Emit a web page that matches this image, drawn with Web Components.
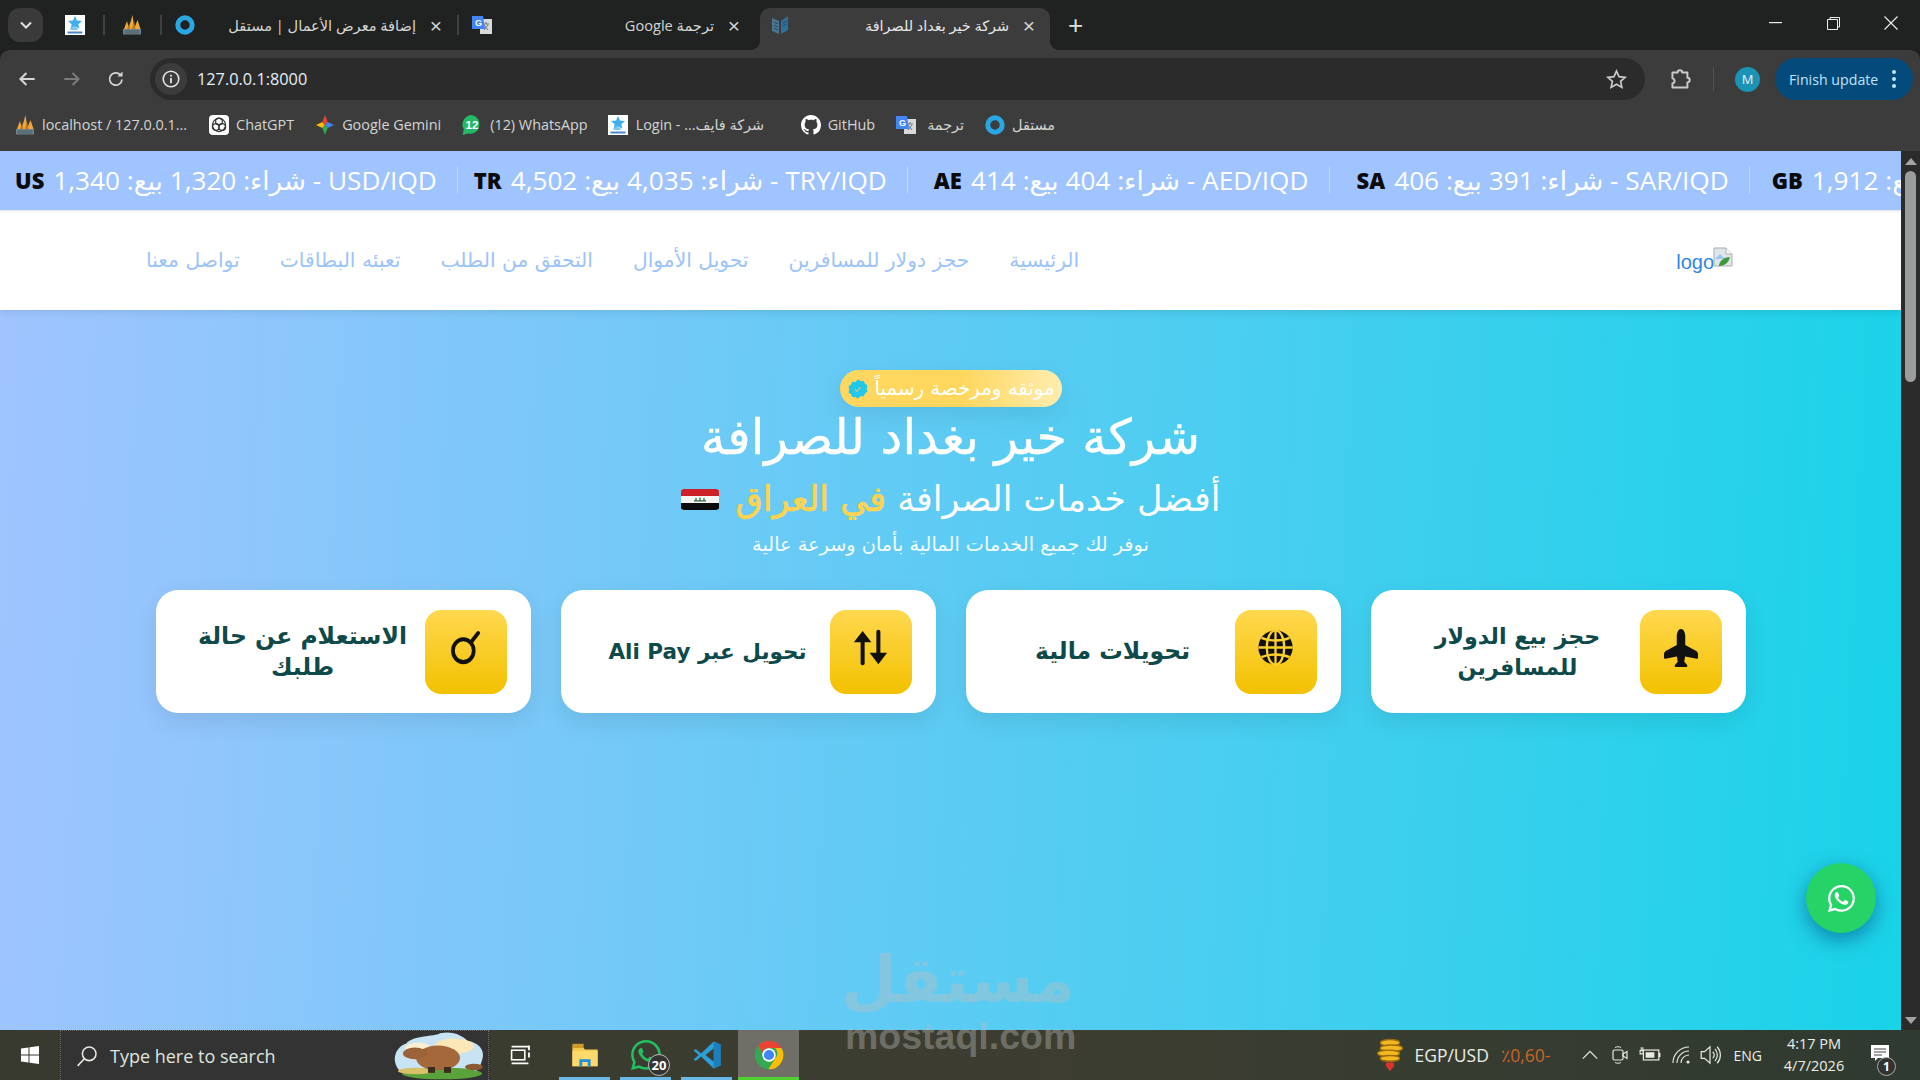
<!DOCTYPE html>
<html lang="ar">
<head>
<meta charset="utf-8">
<title>شركة خير بغداد للصرافة</title>
<style>
  html, body { margin: 0; height: 100%; overflow: hidden; background: #202221; }
  body { display: flex; flex-direction: column; height: 1080px; font-family: "DejaVu Sans", sans-serif; position: relative; }
</style>
</head>
<body>
<browser-chrome></browser-chrome>
<page-view>
  <rate-ticker></rate-ticker>
  <site-nav></site-nav>
  <hero-section></hero-section>
</page-view>
<win-taskbar></win-taskbar>
<mostaql-mark></mostaql-mark>

<script>
const WA_PATH = 'M13.601 2.326A7.85 7.85 0 0 0 7.994 0C3.627 0 .068 3.558.064 7.926c0 1.399.366 2.76 1.057 3.965L0 16l4.204-1.102a7.9 7.9 0 0 0 3.79.965h.004c4.368 0 7.926-3.558 7.93-7.93A7.9 7.9 0 0 0 13.6 2.326zM7.994 14.521a6.6 6.6 0 0 1-3.356-.92l-.24-.144-2.494.654.666-2.433-.156-.251a6.56 6.56 0 0 1-1.007-3.505c0-3.626 2.957-6.584 6.591-6.584a6.56 6.56 0 0 1 4.66 1.931 6.56 6.56 0 0 1 1.928 4.66c-.004 3.639-2.961 6.592-6.592 6.592m3.615-4.934c-.197-.099-1.17-.578-1.353-.646-.182-.065-.315-.099-.445.099-.133.197-.513.646-.627.775-.114.133-.232.148-.43.05-.197-.1-.836-.308-1.592-.985-.59-.525-.985-1.175-1.103-1.372-.114-.198-.011-.304.088-.403.087-.088.197-.232.296-.346.1-.114.133-.198.198-.33.065-.134.034-.248-.015-.347-.05-.099-.445-1.076-.612-1.47-.16-.389-.323-.335-.445-.34-.114-.007-.247-.007-.38-.007a.73.73 0 0 0-.529.247c-.182.198-.691.677-.691 1.654s.71 1.916.81 2.049c.098.133 1.394 2.132 3.383 2.992.47.205.84.326 1.129.418.475.152.904.129 1.246.08.38-.058 1.171-.48 1.338-.943.164-.464.164-.86.114-.943-.049-.084-.182-.133-.38-.232';

// all the little pictures live here, viewBox is always 0 0 20 20 unless the value says otherwise
const ICONS = {
  star: `<rect width="20" height="20" fill="#fff"/><path d="M10 1l2 4.600 5 .4-3.700 3.200 1.100 4.600L10 11.400l-4.400 2.400 1.100-4.600L3 6l5-.4z" fill="#3fb0ee"/><path d="M6 13l3-2 3 2 1 2H5z" fill="#7cc8f2"/><rect x="2.500" y="16.500" width="15" height="2" fill="#4a86c8"/>`,
  pma: `<path d="M2 14L5 6l2 8zM6.500 14L10.500 0l2 14zM12 14l3.500-9 3 9z" fill="#efa93a"/><path d="M5 14l2.500-6 .5 6zM10 14l2-8 1.500 8z" fill="#b9781f"/><rect x="1" y="14" width="18" height="5.500" fill="#70828a"/><path d="M2.500 16h15M2.500 18h15" stroke="#40505a" stroke-width=".8"/>`,
  ring: `<circle cx="10" cy="10" r="7.200" fill="none" stroke="#2aa7e2" stroke-width="5"/>`,
  translate: `<rect x="8" y="4" width="12" height="15" fill="#d7dad9"/><path d="M11 9h6M14 7v2M12 15l4-5M12 10l4 5" stroke="#777" stroke-width="1"/><path d="M0 1h11l2 13H0z" fill="#4285f4"/><text x="3" y="11" font-family="Liberation Sans" font-size="9" font-weight="700" fill="#fff">G</text>`,
  book: `<path d="M2 3l7 3v13l-7-3z" fill="#4d7488"/><path d="M18 1l-7 5v13l7-4z" fill="#2e6f9c"/><path d="M4 7l4 2M4 10l4 2M4 13l4 2M13 8l4-2M13 11l4-2" stroke="#16507c" stroke-width="1"/>`,
  chatgpt: `<rect width="20" height="20" rx="4" fill="#fff"/><g fill="none" stroke="#333" stroke-width="1.200"><circle cx="10" cy="6.500" r="3.400"/><circle cx="6.800" cy="12" r="3.400"/><circle cx="13.200" cy="12" r="3.400"/><circle cx="10" cy="10" r="6.600"/></g>`,
  gemini: `<path d="M10 0l3 7-3 3z" fill="#ea4335"/><path d="M20 10l-7-3-3 3z" fill="#4285f4"/><path d="M10 20l3-7-3-3z" fill="#34a853"/><path d="M0 10l7-3 3 3z" fill="#fbbc04"/><path d="M0 10l7 3 3-3z" fill="#fbbc04"/><path d="M20 10l-7 3-3-3z" fill="#4285f4"/><path d="M10 20l-3-7 3-3z" fill="#34a853"/><path d="M10 0L7 7l3 3z" fill="#ea4335"/>`,
  wabadge: `<path d="M10 0a9.500 9.500 0 0 0-8.200 14.300L.5 20l5.600-1.400A9.500 9.500 0 1 0 10 0z" fill="#25b866"/><text x="10" y="14" text-anchor="middle" font-family="Liberation Sans" font-size="11.500" font-weight="700" fill="#fff">12</text>`,
  github: `<svg viewBox="0 0 16 16" x="0" y="0" width="20" height="20"><path fill="#fff" d="M8 0C3.58 0 0 3.58 0 8c0 3.54 2.29 6.53 5.47 7.59.4.07.55-.17.55-.38 0-.19-.01-.82-.01-1.49-2.01.37-2.53-.49-2.69-.94-.09-.23-.48-.94-.82-1.13-.28-.15-.68-.52-.01-.53.63-.01 1.08.58 1.23.82.72 1.21 1.87.87 2.33.66.07-.52.28-.87.51-1.07-1.78-.2-3.64-.89-3.64-3.95 0-.87.31-1.59.82-2.15-.08-.2-.36-1.02.08-2.12 0 0 .67-.21 2.2.82.64-.18 1.32-.27 2-.27s1.36.09 2 .27c1.53-1.04 2.2-.82 2.2-.82.44 1.1.16 1.92.08 2.12.51.56.82 1.27.82 2.15 0 3.07-1.87 3.75-3.65 3.95.29.25.54.73.54 1.48 0 1.07-.01 1.93-.01 2.2 0 .21.15.46.55.38A8.01 8.01 0 0 0 16 8c0-4.42-3.58-8-8-8"/></svg>`,
  back: `<path d="M17 10H4M9.500 4.500L4 10l5.500 5.500" fill="none" stroke="#d5d7d6" stroke-width="1.800"/>`,
  forward: `<path d="M3 10h13M10.500 4.500L16 10l-5.500 5.500" fill="none" stroke="#7b7d7c" stroke-width="1.800"/>`,
  reload: `<path d="M16 10.500A6.200 6.200 0 1 1 14.200 5.600" fill="none" stroke="#d5d7d6" stroke-width="1.700"/><path d="M16.500 2.500v5h-5z" fill="#d5d7d6"/>`,
  info: `<circle cx="10" cy="10" r="7.800" fill="none" stroke="#e3e5e4" stroke-width="1.600"/><rect x="9.100" y="9" width="1.800" height="5.200" fill="#e3e5e4"/><rect x="9.100" y="5.800" width="1.800" height="1.800" fill="#e3e5e4"/>`,
  bookmark: `<path d="M10 2l2.400 5.300 5.800.6-4.300 3.900 1.200 5.700L10 14.600l-5.100 2.900 1.200-5.700L1.800 7.900l5.800-.6z" fill="none" stroke="#c9cbca" stroke-width="1.600"/>`,
  puzzle: `<path d="M3 4h4.500a2 2 0 0 1 4 0H16v4.500a2 2 0 0 1 0 4V17H3v-3.500a2.300 2.300 0 0 0 0-4.500z" fill="none" stroke="#c9cbca" stroke-width="1.700" stroke-linejoin="round"/>`,
  plane: `<svg viewBox="0 0 16 16" width="20" height="20"><path fill="#111" d="M6.428 1.151C6.708.591 7.213 0 8 0s1.292.592 1.572 1.151C9.861 1.73 10 2.431 10 3v3.691l5.17 2.585a1.5 1.5 0 0 1 .83 1.342V12a.5.5 0 0 1-.582.493l-5.507-.918-.375 2.253 1.318 1.318A.5.5 0 0 1 10.5 16h-5a.5.5 0 0 1-.354-.854l1.319-1.318-.376-2.253-5.507.918A.5.5 0 0 1 0 12v-1.382a1.5 1.5 0 0 1 .83-1.342L6 6.691V3c0-.568.14-1.271.428-1.849"/></svg>`,
  globe: `<circle cx="10" cy="10" r="9.800" fill="#111"/><g fill="none" stroke="#fad02f" stroke-width="1.300"><path d="M10 .2v19.600M.2 10h19.600"/><ellipse cx="10" cy="10" rx="5" ry="9.800"/><path d="M2 4.500c4.500 2 11.500 2 16 0M2 15.500c4.500-2 11.500-2 16 0"/></g>`,
  updown: `<path d="M5.500 19V4" stroke="#111" stroke-width="2.300" stroke-linecap="round"/><path d="M5.500.5l5 6.500H.5z" fill="#111"/><path d="M14.500 1v15" stroke="#111" stroke-width="2.300" stroke-linecap="round"/><path d="M14.500 19.500l-5-6.500h10z" fill="#111"/>`,
  search: `<circle cx="8.600" cy="11.600" r="6.700" fill="none" stroke="#111" stroke-width="2.400"/><path d="M13.500 6.700L18.200 1.200" stroke="#111" stroke-width="2.400" stroke-linecap="round"/>`,
  brokenimg: `<path d="M1 1h12l6 6v12H1z" fill="#dfe6ea" stroke="#a9aeb2"/><path d="M13 1v6h6" fill="#fff" stroke="#a9aeb2"/><path d="M2 12l5-5 5 5z" fill="#9cc8ef"/><path d="M6 19c0-5 5-9 11-9-1 5-5 9-11 9z" fill="#3f9a3a"/>`,
  seal: `<path d="M10 .5l2.700 1.600 3.100-.2 1.200 2.900 2.500 1.800-.8 3 .8 3-2.500 1.800-1.200 2.900-3.100-.2L10 19.500l-2.700-1.600-3.100.2L3 15.200.5 13.400l.8-3-.8-3L3 5.600l1.200-2.900 3.100.2z" fill="#1fc8ec"/><path d="M7 10.300l2 2 3.800-4.200" fill="none" stroke="#d8c46a" stroke-width="1.200"/>`,
  flag: `<svg viewBox="0 0 38 22" width="20" height="20" preserveAspectRatio="none"><rect width="38" height="22" rx="3" fill="#f4f4f2"/><path d="M0 7.300V3a3 3 0 0 1 3-3h32a3 3 0 0 1 3 3v4.300z" fill="#ce2028"/><path d="M0 14.700h38V19a3 3 0 0 1-3 3H3a3 3 0 0 1-3-3z" fill="#0c0c0c"/><path d="M13 12.500h12M15 9.500v3M19 9v3.500M23 9.500v3" stroke="#3a6b4a" stroke-width="1.300"/></svg>`,
  windows: `<path d="M1 3.400l7.500-1v7H1zM9.500 2.200L19 1v8.400H9.500zM1 10.500h7.500v7.100l-7.500-1zM9.500 10.500H19V19l-9.500-1.300z" fill="#fff"/>`,
  magnifier: `<circle cx="12" cy="8" r="6.200" fill="none" stroke="#e8e8e4" stroke-width="1.400"/><path d="M7.600 12.500L1.500 19" stroke="#e8e8e4" stroke-width="1.400"/>`,
  taskview: `<path d="M3 3h14M3 17h14" stroke="#fff" stroke-width="1.300"/><rect x="3" y="6" width="11" height="8" fill="none" stroke="#fff" stroke-width="1.300"/><path d="M17.500 2v4M17.500 8v4" stroke="#fff" stroke-width="1.500"/>`,
  folder: `<path d="M1 4h7l2 2h9v12H1z" fill="#f4c84e"/><rect x="1" y="2" width="8" height="3" fill="#cf9a2a"/><path d="M1 7h18v11H1z" fill="#ffd96b"/><path d="M6 13h8v5h-2v-3H8v3H6z" fill="#1f8ee0"/>`,
  waline: `<svg viewBox="0 0 16 16" width="20" height="20"><path fill="#21c063" d="${WA_PATH}"/></svg>`,
  vscode: `<path d="M14.500 1L19 3v14l-4.500 2L6 11l-3.500 3L1 13l3.500-3L1 7l1.500-1L6 9z" fill="#2a9fd8"/><path d="M14.500 5.500L9 10l5.500 4.500z" fill="#3b3c30"/><path d="M14.500 1L19 3v14l-4.500 2z" fill="#1b7ebd"/>`,
  chrome: `<circle cx="10" cy="10" r="9.500" fill="#34a853"/><path d="M10 .5a9.500 9.500 0 0 1 8.300 4.800H10a4.700 4.700 0 0 0-4.400 3L2.700 3.900A9.500 9.500 0 0 1 10 .5z" fill="#ea4335"/><path d="M18.300 5.300A9.500 9.500 0 0 1 9.600 19.500l4.400-7A4.700 4.700 0 0 0 14 5.300z" fill="#fbbc04"/><circle cx="10" cy="10" r="4.500" fill="#fff"/><circle cx="10" cy="10" r="3.400" fill="#4285f4"/>`,
  coins: `<g fill="#f2b81e" stroke="#9a6a12" stroke-width=".8"><ellipse cx="10" cy="2.800" rx="7" ry="1.900"/><ellipse cx="11" cy="6" rx="8" ry="1.900"/><ellipse cx="9" cy="9" rx="8" ry="1.900"/><ellipse cx="10" cy="12" rx="7" ry="1.700"/></g><path d="M10 19.500l-3-3a1.800 1.800 0 0 1 3-1.800 1.800 1.800 0 0 1 3 1.800z" fill="#d8342c"/>`,
  chevup: `<path d="M2 14l8-8 8 8" fill="none" stroke="#e8e8e4" stroke-width="1.400"/>`,
  meet: `<rect x="3" y="5" width="10" height="10" rx="1.500" fill="none" stroke="#e8e8e4" stroke-width="1.200"/><path d="M13 9l4-2.500v7L13 11z" fill="none" stroke="#e8e8e4" stroke-width="1.200"/><path d="M5 2.500c2-1 4-1 6 0M5 17.500c2 1 4 1 6 0" fill="none" stroke="#e8e8e4"/>`,
  battery: `<rect x="4" y="5.500" width="14" height="9" fill="none" stroke="#e8e8e4" stroke-width="1.100"/><rect x="6" y="7.500" width="8" height="5" fill="#e8e8e4"/><rect x="18" y="8" width="1.500" height="4" fill="#e8e8e4"/><path d="M1 6h3v3H1zM2 3v3M3.500 3v3" stroke="#e8e8e4" fill="none"/>`,
  wifi: `<g fill="none" stroke="#e8e8e4" stroke-width="1.100"><path d="M1 18A16 16 0 0 1 17 2"/><path d="M5 18A12 12 0 0 1 17 6"/><path d="M9 18a8 8 0 0 1 8-8"/></g><circle cx="16" cy="17" r="1.600" fill="#e8e8e4"/>`,
  volume: `<path d="M2 7h3l5-4.500v15L5 13H2z" fill="none" stroke="#e8e8e4" stroke-width="1.100"/><path d="M12.500 7a4 4 0 0 1 0 6M14.500 4.500a8 8 0 0 1 0 11M16.500 2.500a11 11 0 0 1 0 15" fill="none" stroke="#e8e8e4" stroke-width="1.100"/>`,
  note: `<path d="M1 2h18v13H8l-3 3v-3H1z" fill="#fff"/><path d="M4 6h12M4 9h12M4 12h8" stroke="#444" stroke-width="1.100"/>`,
  beaver: `<svg viewBox="0 0 94 74" width="20" height="20" preserveAspectRatio="none"><path d="M8 60C-2 44 4 22 14 18 22 4 42 8 48 2c14-4 22 4 28 12 10 2 18 14 14 30-2 10-4 16-8 18z" fill="#c8e3f3"/><ellipse cx="62" cy="22" rx="20" ry="12" fill="#fbe7b8"/><ellipse cx="26" cy="26" rx="13" ry="10" fill="#fbf1d2"/><ellipse cx="50" cy="64" rx="40" ry="9" fill="#5aa23b"/><ellipse cx="24" cy="60" rx="18" ry="5" fill="#d9c169"/><ellipse cx="46" cy="40" rx="22" ry="19" fill="#a5683a"/><ellipse cx="23" cy="33" rx="12" ry="9" fill="#9c6238"/><ellipse cx="82" cy="54" rx="9" ry="5" fill="#8a5a32"/><rect x="36" y="54" width="7" height="9" fill="#3c2a1c"/><rect x="52" y="54" width="7" height="9" fill="#3c2a1c"/></svg>`
};

class UiIcon extends HTMLElement {
  connectedCallback() {
    const w = this.getAttribute('w') || 20;
    const h = this.getAttribute('h') || w;
    const name = this.getAttribute('name');
    this.attachShadow({ mode: 'open' }).innerHTML = `
      <style>:host { display: inline-flex; flex: none; width: ${w}px; height: ${h}px; } svg { display: block; width: 100%; height: 100%; overflow: visible; }</style>
      <svg viewBox="0 0 20 20" preserveAspectRatio="none">${ICONS[name]}</svg>`;
    const inner = this.shadowRoot.querySelector('svg svg');
    if (inner) { inner.setAttribute('width', '20'); inner.setAttribute('height', '20'); }
  }
}
customElements.define('ui-icon', UiIcon);

class TabItem extends HTMLElement {
  connectedCallback() {
    this.attachShadow({ mode: 'open' }).innerHTML = `
      <style>
        :host { display: flex; align-items: center; height: 42px; box-sizing: border-box; color: #d4d6d5; font-size: 14.6px; position: relative; flex: none; padding: 0 0 8px ${this.getAttribute('pad') || 0}px; }
        :host([active]) { background: #3c3c3c; border-radius: 10px 10px 0 0; color: #e6e8e7; font-size: 14.4px; }
        :host([active])::before, :host([active])::after { content: ""; position: absolute; bottom: 0; width: 10px; height: 10px; }
        :host([active])::before { left: -10px; background: radial-gradient(circle at 0 0, transparent 10px, #3c3c3c 10.500px); }
        :host([active])::after { right: -10px; background: radial-gradient(circle at 100% 0, transparent 10px, #3c3c3c 10.500px); }
        .label { flex: 1; direction: rtl; text-align: right; white-space: nowrap; font-family: "Open Sans", "DejaVu Sans", sans-serif; padding-right: 5px; }
        .close { width: 30px; text-align: center; color: #d4d6d5; font: 21px/1 "Liberation Sans", sans-serif; margin-right: 6px; }
      </style>
      <slot name="icon"></slot>
      <div class="label"><slot></slot></div>
      <div class="close">×</div>`;
  }
}
customElements.define('tab-item', TabItem);

class BookmarkItem extends HTMLElement {
  connectedCallback() {
    this.attachShadow({ mode: 'open' }).innerHTML = `
      <style>
        :host { display: flex; align-items: center; gap: 7px; flex: none; color: #d3d5d4; font: 14.4px "Open Sans", "DejaVu Sans", sans-serif; white-space: nowrap; }
      </style>
      <slot name="icon"></slot><span><slot></slot></span>`;
  }
}
customElements.define('bookmark-item', BookmarkItem);

class BrowserChrome extends HTMLElement {
  constructor() {
    super();
    this.attachShadow({ mode: 'open' });
  }

  connectedCallback() {
    this.render();
  }

  render() {
    this.shadowRoot.innerHTML = `
      <style>
        :host { display: block; flex: none; height: 151px; background: #202221; font-family: "Open Sans", "DejaVu Sans", sans-serif; }
        .strip { display: flex; align-items: flex-end; height: 50px; position: relative; }
        .chev { width: 35px; height: 34px; border-radius: 12px; background: #3a3a3a; margin: 0 0 8px 8px; display: flex; align-items: center; justify-content: center; flex: none; }
        .fav { display: flex; align-items: center; height: 34px; margin-bottom: 8px; flex: none; }
        .sep { width: 2px; height: 20px; background: #3f4140; margin-bottom: 15px; flex: none; }
        .plus { margin-left: 18px; margin-bottom: 15px; color: #dfe1e0; font: 26px/20px "Liberation Sans", sans-serif; }
        .winbtns { margin-left: auto; display: flex; height: 50px; align-items: center; padding-bottom: 4px; box-sizing: border-box; }
        .winbtns div { width: 58px; display: flex; justify-content: center; }
        .tools { height: 50px; background: #3c3c3c; border-radius: 10px 10px 0 0; display: flex; align-items: flex-start; box-sizing: border-box; padding: 8px 8px 0 0; }
        .nav { display: flex; align-items: center; width: 150px; height: 42px; padding-left: 16px; box-sizing: border-box; gap: 23px; flex: none; }
        .omni { flex: none; width: 1495px; height: 42px; border-radius: 21px; background: #2b2b2b; display: flex; align-items: center; padding-left: 5px; padding-right: 18px; box-sizing: border-box; }
        .info { width: 32px; height: 32px; border-radius: 50%; background: #3c3c3c; display: flex; align-items: center; justify-content: center; }
        .url { margin-left: 10px; color: #e4f0f5; font-size: 16.3px; flex: 1; }
        .right { display: flex; align-items: center; height: 42px; flex: 1; }
        .divider { width: 1px; height: 24px; background: #5a5048; margin: 0 21px 0 21px; }
        .avatar { width: 25px; height: 25px; border-radius: 50%; background: #1a93b4; color: #eef; font: 13px/25px "Open Sans", sans-serif; text-align: center; }
        .update { width: 138px; height: 42px; margin-left: 15px; border-radius: 21px; background: #044a7a; color: #bfe3ff; font-size: 14.2px; display: flex; align-items: center; justify-content: space-between; padding: 0 17px 0 14px; box-sizing: border-box; white-space: nowrap; }
        .dots { display: flex; flex-direction: column; gap: 3px; }
        .dots i { width: 4px; height: 4px; border-radius: 50%; background: #bfe3ff; display: block; }
        .bookmarks { height: 51px; background: #3c3c3c; display: flex; align-items: center; padding-left: 15px; padding-bottom: 2px; box-sizing: border-box; }
      </style>
      <div class="strip">
        <div class="chev"><svg width="12" height="8" viewBox="0 0 12 8"><path d="M1 1.500l5 5 5-5" fill="none" stroke="#e0e2e1" stroke-width="2"/></svg></div>
        <div class="fav" style="margin-left:22px"><ui-icon name="star"></ui-icon></div>
        <div class="sep" style="margin-left:18px"></div>
        <div class="fav" style="margin-left:17px"><ui-icon name="pma"></ui-icon></div>
        <div class="sep" style="margin-left:18px"></div>
        <div class="fav" style="margin-left:13px"><ui-icon name="ring"></ui-icon></div>
        <tab-item style="width:262px"><span>إضافة معرض الأعمال | مستقل</span></tab-item>
        <div class="sep"></div>
        <div class="fav" style="margin-left:13px"><ui-icon name="translate"></ui-icon></div>
        <tab-item style="width:263px"><span>ترجمة Google</span></tab-item>
        <tab-item active style="width:290px;margin-left:5px" pad="10"><ui-icon slot="icon" name="book"></ui-icon><span>شركة خير بغداد للصرافة</span></tab-item>
        <div class="plus">+</div>
        <div class="winbtns">
          <div><svg width="13" height="2"><rect width="13" height="1.200" fill="#eee"/></svg></div>
          <div><svg width="13" height="13" viewBox="0 0 13 13"><path d="M3 2.500V.5h9.500V10H10.500M.5 2.500h10v10H.5z" fill="none" stroke="#eee"/></svg></div>
          <div><svg width="14" height="14" viewBox="0 0 14 14"><path d="M.5.5l13 13M13.500.5l-13 13" stroke="#eee" stroke-width="1.100"/></svg></div>
        </div>
      </div>
      <div class="tools">
        <div class="nav"><ui-icon name="back" w="22"></ui-icon><ui-icon name="forward" w="22"></ui-icon><ui-icon name="reload" w="20"></ui-icon></div>
        <div class="omni">
          <div class="info"><ui-icon name="info"></ui-icon></div>
          <div class="url">127.0.0.1:8000</div>
          <ui-icon name="bookmark" w="21"></ui-icon>
        </div>
        <div class="right">
          <ui-icon name="puzzle" w="23" style="margin-left:24px"></ui-icon>
          <div class="divider"></div>
          <div class="avatar">M</div>
          <div class="update">Finish update<div class="dots"><i></i><i></i><i></i></div></div>
        </div>
      </div>
      <div class="bookmarks">
        <bookmark-item><ui-icon slot="icon" name="pma"></ui-icon>localhost / 127.0.0.1...</bookmark-item>
        <bookmark-item style="margin-left:22px"><ui-icon slot="icon" name="chatgpt"></ui-icon>ChatGPT</bookmark-item>
        <bookmark-item style="margin-left:22px;gap:8px"><ui-icon slot="icon" name="gemini" w="18" h="20"></ui-icon>Google Gemini</bookmark-item>
        <bookmark-item style="margin-left:21px;gap:8px"><ui-icon slot="icon" name="wabadge"></ui-icon>(12) WhatsApp</bookmark-item>
        <bookmark-item style="margin-left:20px;width:193px;gap:8px"><ui-icon slot="icon" name="star"></ui-icon><span dir="rtl">شركة فايف... - Login</span></bookmark-item>
        <bookmark-item><ui-icon slot="icon" name="github"></ui-icon>GitHub</bookmark-item>
        <bookmark-item style="margin-left:21px;gap:11px"><ui-icon slot="icon" name="translate"></ui-icon><span dir="rtl">ترجمة</span></bookmark-item>
        <bookmark-item style="margin-left:21px"><ui-icon slot="icon" name="ring"></ui-icon><span dir="rtl">مستقل</span></bookmark-item>
      </div>`;
  }
}
customElements.define('browser-chrome', BrowserChrome);

class PageView extends HTMLElement {
  connectedCallback() {
    this.attachShadow({ mode: 'open' }).innerHTML = `
      <style>
        :host { display: flex; flex: none; height: 879px; background: #fff; }
        .content { flex: 1; min-width: 0; display: flex; flex-direction: column; overflow: hidden; }
        .bar { width: 19px; flex: none; background: #2b2b2b; display: flex; flex-direction: column; align-items: center; justify-content: space-between; padding: 7px 0 6px; box-sizing: border-box; }
        .arrow { width: 0; height: 0; border-left: 6px solid transparent; border-right: 6px solid transparent; }
        .up { border-bottom: 7px solid #a3a5a4; }
        .down { border-top: 7px solid #a3a5a4; }
        .thumb { width: 11px; height: 211px; border-radius: 6px; background: #9a9d9b; margin-top: 6px; margin-bottom: auto; }
      </style>
      <div class="content"><slot></slot></div>
      <div class="bar"><div class="arrow up"></div><div class="thumb"></div><div class="arrow down"></div></div>`;
  }
}
customElements.define('page-view', PageView);

class RateItem extends HTMLElement {
  connectedCallback() {
    this.attachShadow({ mode: 'open' }).innerHTML = `
      <style>
        :host { display: flex; flex: none; align-items: center; direction: rtl; gap: 9px; height: 59px; padding-bottom: 2px; box-sizing: border-box; white-space: nowrap; color: #fff; font: 26.2px "Open Sans", "DejaVu Sans", sans-serif; }
        b { color: #0b0b0b; font: 800 22px "Open Sans", sans-serif; }
        .sep { width: 1px; height: 28px; background: rgba(255,255,255,.35); margin-left: 11px; }
      </style>
      <div class="sep"></div>
      <span dir="rtl"><slot></slot></span>
      <b>${this.getAttribute('code')}</b>`;
  }
}
customElements.define('rate-item', RateItem);

class RateTicker extends HTMLElement {
  connectedCallback() {
    this.attachShadow({ mode: 'open' }).innerHTML = `
      <style>
        :host { display: flex; flex: none; height: 59px; overflow: hidden; background: #a0c4ff; gap: 20px; padding-left: 15px; box-shadow: 0 1px 2px rgba(0,0,0,.12); z-index: 2; position: relative; }
      </style>
      <rate-item code="US">USD/IQD - شراء: 1,320 بيع: 1,340</rate-item>
      <rate-item code="TR" style="margin-left:-4px">TRY/IQD - شراء: 4,035 بيع: 4,502</rate-item>
      <rate-item code="AE" style="margin-left:6px">AED/IQD - شراء: 404 بيع: 414</rate-item>
      <rate-item code="SA" style="margin-left:7px">SAR/IQD - شراء: 391 بيع: 406</rate-item>
      <rate-item code="GB" style="margin-left:2px">بيع: 1,912</rate-item>`;
  }
}
customElements.define('rate-ticker', RateTicker);

class SiteNav extends HTMLElement {
  connectedCallback() {
    this.attachShadow({ mode: 'open' }).innerHTML = `
      <style>
        :host { display: flex; flex: none; height: 100px; background: #fff; direction: rtl; align-items: center; justify-content: space-between; padding: 0 168px 0 146px; box-sizing: border-box; position: relative; z-index: 1; box-shadow: 0 2px 8px rgba(0,0,0,.1); }
        .logo { display: flex; direction: ltr; align-items: flex-end; color: #2f86e8; font: 20px "Liberation Sans", sans-serif; }
        ul { display: flex; gap: 40px; margin: 0; padding: 0; list-style: none; color: #9cc4fb; font-size: 20.3px; }
      </style>
      <div class="logo"><span>logo</span><ui-icon name="brokenimg" style="margin-bottom:7px;margin-left:-1px"></ui-icon></div>
      <ul>
        <li>الرئيسية</li><li>حجز دولار للمسافرين</li><li>تحويل الأموال</li><li>التحقق من الطلب</li><li>تعبئه البطاقات</li><li>تواصل معنا</li>
      </ul>`;
  }
}
customElements.define('site-nav', SiteNav);

class ServiceCard extends HTMLElement {
  connectedCallback() {
    this.attachShadow({ mode: 'open' }).innerHTML = `
      <style>
        :host { display: flex; align-items: center; direction: rtl; height: 123px; box-sizing: border-box; padding: 0 24px 0 25px; background: #fff; border-radius: 22px; box-shadow: 0 8px 24px rgba(0,0,0,.09); }
        .tile { width: 82px; height: 84px; flex: none; border-radius: 16px; background: linear-gradient(180deg, #ffd84f, #f2c100); display: flex; align-items: center; justify-content: center; padding-bottom: 8px; box-sizing: border-box; }
        .text { flex: 1; text-align: center; color: #0f4a4a; font-size: ${this.getAttribute('size') || 23.5}px; font-weight: 700; line-height: 31px; padding: 0 10px; }
      </style>
      <div class="tile"><ui-icon name="${this.getAttribute('icon')}" w="${this.getAttribute('iw') || 35}" h="${this.getAttribute('ih') || 35}"></ui-icon></div>
      <div class="text"><slot></slot></div>`;
  }
}
customElements.define('service-card', ServiceCard);

class HeroSection extends HTMLElement {
  connectedCallback() {
    this.attachShadow({ mode: 'open' }).innerHTML = `
      <style>
        :host { flex: 1; display: flex; flex-direction: column; align-items: center; background: linear-gradient(93deg, #a0c4ff, #19d3e8); color: #fff; position: relative; }
        .badge { margin-top: 60px; height: 37px; width: 222px; box-sizing: border-box; border-radius: 19px; background: linear-gradient(90deg, #ffd75e 0%, #ffd75e 55%, #ffecb0 100%); display: flex; direction: ltr; align-items: center; gap: 7px; padding: 0 8px; font-size: 19.8px; white-space: nowrap; box-shadow: 0 8px 24px rgba(0,0,0,.08); }
        h1 { margin: 0; font-size: 49px; font-weight: 400; line-height: 62px; white-space: nowrap; -webkit-text-stroke: .4px #fff; }
        h2 { margin: 8px 0 0; font-size: 35px; font-weight: 400; line-height: 44px; display: flex; align-items: center; gap: 17px; direction: rtl; white-space: nowrap; }
        h2 em { font-style: normal; color: #ffd34d; -webkit-text-stroke: .7px #ffd34d; }
        p { margin: 11px 0 0; font-size: 19.3px; line-height: 26px; color: #f3fbff; }
        .cards { display: grid; grid-template-columns: repeat(4, 375px); gap: 30px; direction: rtl; margin-top: 32px; }
      </style>
      <div class="badge"><ui-icon name="seal" w="20"></ui-icon><span dir="rtl">موثقه ومرخصة رسمياً</span></div>
      <h1 dir="rtl">شركة خير بغداد للصرافة</h1>
      <h2><span>أفضل خدمات الصرافة <em>في العراق</em></span><ui-icon name="flag" w="38" h="21"></ui-icon></h2>
      <p dir="rtl">نوفر لك جميع الخدمات المالية بأمان وسرعة عالية</p>
      <div class="cards">
        <service-card icon="plane" iw="34" ih="38" size="22.2">حجز بيع الدولار للمسافرين</service-card>
        <service-card icon="globe">تحويلات مالية</service-card>
        <service-card icon="updown" size="21.5">تحويل عبر Ali Pay</service-card>
        <service-card icon="search" iw="31" ih="34">الاستعلام عن حالة طلبك</service-card>
      </div>
      <whatsapp-fab></whatsapp-fab>`;
  }
}
customElements.define('hero-section', HeroSection);

class WhatsappFab extends HTMLElement {
  connectedCallback() {
    this.attachShadow({ mode: 'open' }).innerHTML = `
      <style>
        :host { position: absolute; right: 25px; bottom: 97px; width: 70px; height: 70px; border-radius: 50%; background: #25d366; display: flex; align-items: center; justify-content: center; box-shadow: 0 7px 20px rgba(0,70,120,.55); }
        svg { width: 27px; height: 27px; fill: #fff; }
      </style>
      <svg viewBox="0 0 16 16"><path d="${WA_PATH}"/></svg>`;
  }
}
customElements.define('whatsapp-fab', WhatsappFab);

class WinTaskbar extends HTMLElement {
  connectedCallback() {
    this.attachShadow({ mode: 'open' }).innerHTML = `
      <style>
        :host { display: flex; flex: none; height: 50px; align-items: center; background: linear-gradient(90deg, #393a2f, #3d3e31 55%, #2f3a30); color: #eceee9; font-family: "Open Sans", sans-serif; }
        .start { width: 60px; display: flex; justify-content: center; flex: none; }
        .search { width: 429px; height: 50px; box-sizing: border-box; background: #333; border: 1px dotted #6b6b66; border-bottom: 0; display: flex; align-items: center; position: relative; flex: none; padding-left: 15px; font-size: 18px; color: #dfe5df; }
        .search span { margin-left: 12px; }
        .search ui-icon { flex: none; }
        .app { position: relative; width: 51px; height: 50px; margin-left: 10px; display: flex; align-items: center; justify-content: center; flex: none; }
        .app::after { content: ""; position: absolute; left: 0; right: 0; bottom: 0; height: 3px; background: #6ab8e8; }
        .app.on { width: 61px; margin-left: 6px; background: #6f6f68; }
        .app.on::after { background: #4fd12f; }
        .count { position: absolute; right: 1px; bottom: 4px; width: 22px; height: 22px; border-radius: 50%; background: #333; border: 1px solid #bbb; box-sizing: border-box; font: 700 13px/20px "Open Sans", sans-serif; color: #fff; text-align: center; }
        .tray { margin-left: auto; display: flex; align-items: center; height: 50px; }
        .gain { color: #c9652a; font: 17.5px "Open Sans", "DejaVu Sans", sans-serif; margin-left: 12px; unicode-bidi: plaintext; direction: ltr; }
        .pair { font-size: 17.5px; margin-left: 10px; }
        .clock { text-align: center; font-size: 14.5px; line-height: 22px; width: 72px; margin-left: 16px; }
        .eng { font-size: 14px; margin-left: 13px; }
        .notice { position: relative; margin-left: 20px; margin-right: 30px; }
        .notice b { position: absolute; right: -6px; bottom: -8px; width: 19px; height: 19px; border-radius: 50%; border: 1px solid #aaa; background: #333; font: 700 12px/18px "Open Sans", sans-serif; text-align: center; box-sizing: border-box; color: #fff; }
      </style>
      <div class="start"><ui-icon name="windows"></ui-icon></div>
      <div class="search"><ui-icon name="magnifier" w="22"></ui-icon><span>Type here to search</span><ui-icon name="beaver" w="94" h="48" style="margin-left:auto;margin-right:2px"></ui-icon></div>
      <ui-icon name="taskview" w="24" style="margin-left:19px"></ui-icon>
      <div class="app" style="margin-left:27px"><ui-icon name="folder" w="28"></ui-icon></div>
      <div class="app"><ui-icon name="waline" w="30" h="30"></ui-icon><div class="count">20</div></div>
      <div class="app"><ui-icon name="vscode" w="30"></ui-icon></div>
      <div class="app on"><ui-icon name="chrome" w="30"></ui-icon></div>
      <div class="tray">
        <ui-icon name="coins" w="28" h="34"></ui-icon>
        <span class="pair">EGP/USD</span>
        <bdo class="gain" dir="ltr">٪0,60-</bdo>
        <ui-icon name="chevup" w="18" style="margin-left:30px"></ui-icon>
        <ui-icon name="meet" w="20" style="margin-left:11px"></ui-icon>
        <ui-icon name="battery" w="22" style="margin-left:9px"></ui-icon>
        <ui-icon name="wifi" style="margin-left:11px"></ui-icon>
        <ui-icon name="volume" w="22" style="margin-left:7px"></ui-icon>
        <span class="eng">ENG</span>
        <div class="clock">4:17 PM<br>4/7/2026</div>
        <div class="notice"><ui-icon name="note" w="20"></ui-icon><b>1</b></div>
      </div>`;
  }
}
customElements.define('win-taskbar', WinTaskbar);

// the site's watermark sits over both the page and the taskbar
class MostaqlMark extends HTMLElement {
  connectedCallback() {
    this.attachShadow({ mode: 'open' }).innerHTML = `
      <style>
        :host { position: absolute; left: 845px; top: 940px; width: 230px; display: block; color: rgba(190,190,190,.39); text-align: center; pointer-events: none; }
        .ar { font: 700 64px/80px "DejaVu Sans", sans-serif; direction: rtl; height: 80px; white-space: nowrap; }
        .en { font: 700 37.500px/38px "Liberation Sans", sans-serif; white-space: nowrap; margin-top: -3px; }
      </style>
      <div class="ar">مستقل</div>
      <div class="en">mostaql.com</div>`;
  }
}
customElements.define('mostaql-mark', MostaqlMark);
</script>
</body>
</html>
